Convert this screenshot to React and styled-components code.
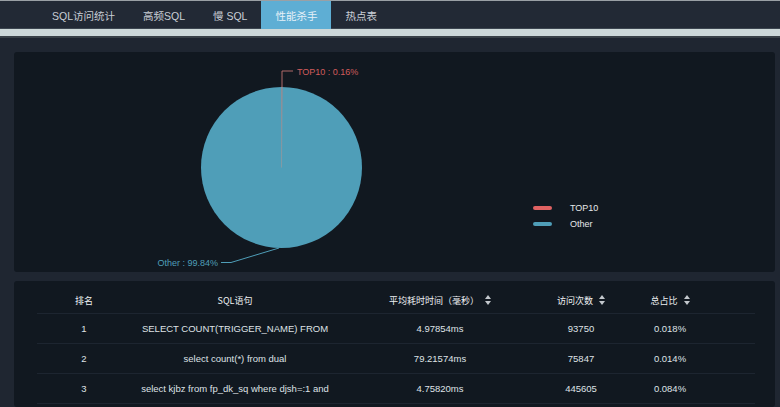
import React from "react";
import styled, { createGlobalStyle } from "styled-components";

const GlobalStyle = createGlobalStyle`
  html, body { margin: 0; padding: 0; background: #1f2631; }
  body { font-family: "Liberation Sans", "Noto Sans CJK SC", sans-serif; }
  * { box-sizing: border-box; }
`;

const Page = styled.div`
  width: 780px;
  height: 407px;
  overflow: hidden;
  background: #1f2631;
  display: flex;
  flex-direction: column;
`;

const TopLine = styled.div`
  height: 1px;
  background: #9aa0a5;
  flex: none;
`;

const TabBar = styled.nav`
  height: 28px;
  flex: none;
  background: #222935;
  box-shadow: inset 0 -1px 0 #3c4550;
  display: flex;
  padding-left: 38px;
`;

const Tab = styled.div`
  height: 100%;
  padding: 0 14px;
  display: flex;
  align-items: center;
  font-family: "Liberation Sans", "Noto Sans CJK SC", sans-serif;
  font-size: 10.5px;
  color: ${(p) => (p.$active ? "#e6f1f8" : "#c9ced6")};
  background: ${(p) => (p.$active ? "#5eaed4" : "transparent")};
  white-space: pre;
`;

const Strip = styled.div`
  height: 9px;
  flex: none;
  background: #cdd8d9;
  border-bottom: 2px solid #394148;
`;

const Body = styled.main`
  flex: 1;
  padding: 14px 5px 0 14px;
  display: flex;
  flex-direction: column;
  gap: 9px;
`;

const Panel = styled.section`
  background: #111820;
  border-radius: 3px;
`;

const ChartPanel = styled(Panel)`
  height: 220px;
  flex: none;
  display: flex;
`;

const PieSvg = styled.svg`
  display: block;
  flex: none;
`;

const Legend = styled.div`
  display: flex;
  flex-direction: column;
  gap: 5px;
  padding-top: 150px;
  margin-left: 19px;
`;

const LegendItem = styled.div`
  display: flex;
  align-items: center;
  gap: 18px;
  font-size: 9px;
  color: #e6e8ea;
  height: 11px;
`;

const Swatch = styled.span`
  width: 19px;
  height: 4px;
  border-radius: 2px;
  background: ${(p) => p.$color};
`;

const TablePanel = styled(Panel)`
  flex: 1;
  padding: 6px 20px 0 23px;
`;

const Row = styled.div`
  display: grid;
  grid-template-columns: 94px 208px 202px 80px 98px 1fr;
  height: ${(p) => (p.$head ? "27px" : "30px")};
  border-bottom: 1px solid #1d2530;
  align-items: center;
`;

const Cell = styled.div`
  text-align: center;
  font-size: ${(p) => (p.$head ? "9px" : "9.5px")};
  color: ${(p) => (p.$head ? "#eef0f2" : "#dfe2e6")};
  font-family: ${(p) =>
    p.$head
      ? '"Noto Sans CJK SC", "Liberation Sans", sans-serif'
      : '"Liberation Sans", "Noto Sans CJK SC", sans-serif'};
  white-space: nowrap;
  display: flex;
  justify-content: center;
  align-items: center;
  gap: 6px;
`;

const SortIcon = () => (
  <svg width="6" height="10" viewBox="0 0 6 10">
    <path d="M3 0 L6 4 L0 4 Z" fill="#c3c7cc" />
    <path d="M3 10 L6 6 L0 6 Z" fill="#c3c7cc" />
  </svg>
);

const tabs = ["SQL访问统计", "高频SQL", "慢 SQL", "性能杀手", "热点表"];

const rows = [
  ["1", "SELECT COUNT(TRIGGER_NAME) FROM", "4.97854ms", "93750", "0.018%"],
  ["2", "select count(*) from dual", "79.21574ms", "75847", "0.014%"],
  ["3", "select kjbz from fp_dk_sq where djsh=:1 and", "4.75820ms", "445605", "0.084%"],
];

const Pie = () => {
  const cx = 267.5;
  const cy = 115.5;
  const r = 80.5;
  const a = (0.16 / 100) * Math.PI * 2;
  const x2 = cx + r * Math.sin(a);
  const y2 = cy - r * Math.cos(a);
  return (
    <PieSvg width="500" height="220" viewBox="0 0 500 220">
      <circle cx={cx} cy={cy} r={r} fill="#4f9eb8" />
      <path
        d={`M${cx} ${cy} L${cx} ${cy - r} A${r} ${r} 0 0 1 ${x2} ${y2} Z`}
        fill="#d05a5a"
        stroke="#8a9aa2"
        strokeWidth="0.6"
      />
      <polyline
        points={`268,35 268,19 279,19`}
        fill="none"
        stroke="#b06868"
        strokeWidth="1"
      />
      <text
        x="283"
        y="22.5"
        fontSize="9"
        fill="#d25c5c"
        fontFamily="Liberation Sans, sans-serif"
      >
        TOP10 : 0.16%
      </text>
      <polyline
        points={`265,196 217,210.5 207,210.5`}
        fill="none"
        stroke="#4f9eb8"
        strokeWidth="1"
      />
      <text
        x="204"
        y="213.5"
        fontSize="9"
        fill="#4f9eb8"
        textAnchor="end"
        fontFamily="Liberation Sans, sans-serif"
      >
        Other : 99.84%
      </text>
    </PieSvg>
  );
};

export default function App() {
  return (
    <>
      <GlobalStyle />
      <Page>
        <TopLine />
        <TabBar>
          {tabs.map((t) => (
            <Tab key={t} $active={t === "性能杀手"}>
              {t}
            </Tab>
          ))}
        </TabBar>
        <Strip />
        <Body>
          <ChartPanel>
            <Pie />
            <Legend>
              <LegendItem>
                <Swatch $color="#e06262" />
                TOP10
              </LegendItem>
              <LegendItem>
                <Swatch $color="#4f9eb8" />
                Other
              </LegendItem>
            </Legend>
          </ChartPanel>
          <TablePanel>
            <Row $head>
              <Cell $head>排名</Cell>
              <Cell $head>SQL语句</Cell>
              <Cell $head>
                平均耗时时间（毫秒）
                <SortIcon />
              </Cell>
              <Cell $head>
                访问次数
                <SortIcon />
              </Cell>
              <Cell $head>
                总占比
                <SortIcon />
              </Cell>
              <div />
            </Row>
            {rows.map((r) => (
              <Row key={r[0]}>
                {r.map((c, i) => (
                  <Cell key={i}>{c}</Cell>
                ))}
                <div />
              </Row>
            ))}
          </TablePanel>
        </Body>
      </Page>
    </>
  );
}
